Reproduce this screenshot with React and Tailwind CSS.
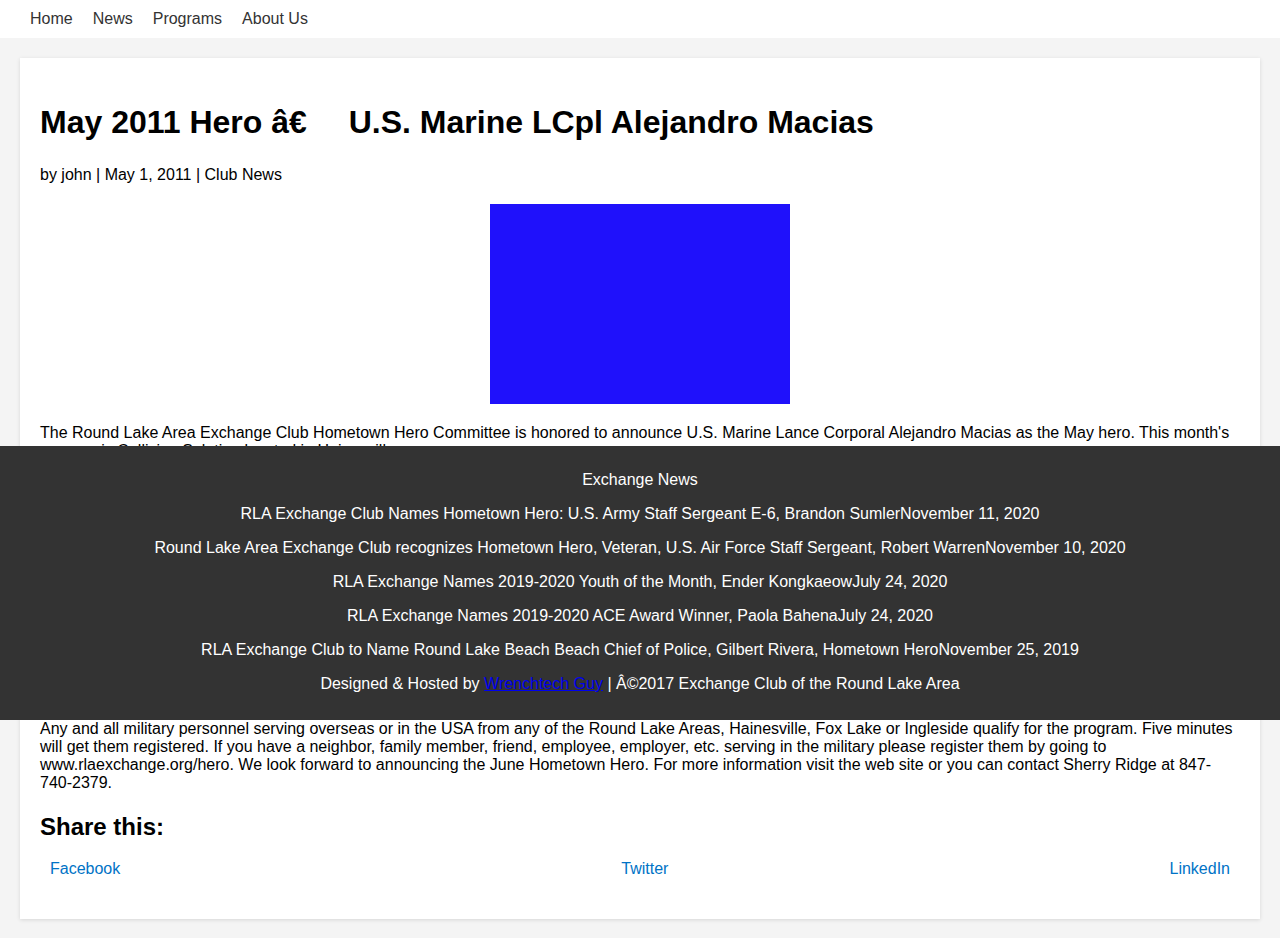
const navItems = ["Home", "News", "Programs", "About Us"];

const recent = [
  ["RLA Exchange Club Names Hometown Hero: U.S. Army Staff Sergeant E-6, Brandon Sumler", "November 11, 2020"],
  ["Round Lake Area Exchange Club recognizes Hometown Hero, Veteran, U.S. Air Force Staff Sergeant, Robert Warren", "November 10, 2020"],
  ["RLA Exchange Names 2019-2020 Youth of the Month, Ender Kongkaeow", "July 24, 2020"],
  ["RLA Exchange Names 2019-2020 ACE Award Winner, Paola Bahena", "July 24, 2020"],
  ["RLA Exchange Club to Name Round Lake Beach Beach Chief of Police, Gilbert Rivera, Hometown Hero", "November 25, 2019"],
];

export default function App() {
  return (
    <div className="relative min-h-[938px] bg-[#f4f4f4] text-black font-['Liberation_Sans',Arial,sans-serif] text-base leading-[18px]">
      {/* top nav */}
      <nav className="bg-white h-[38px]">
        <ul className="flex gap-5 pl-[30px] pt-[10px] text-[#333]">
          {navItems.map((n) => (
            <li key={n}>
              <a href="#">{n}</a>
            </li>
          ))}
        </ul>
      </nav>

      <main className="p-5">
        <article className="bg-white shadow-[0_1px_4px_rgba(0,0,0,0.12)] px-5 pt-[46px] pb-[41px]">
          <h1 className="text-[32px] font-bold leading-[37px]">
            May 2011 Hero â€<span className="inline-block w-[33px]" /> U.S. Marine LCpl Alejandro Macias
          </h1>
          <p className="mt-[25px]">by john | May 1, 2011 | Club News</p>
          <div className="flex justify-center mt-[20px]">
            <div className="w-[300px] h-[200px] bg-[#1f11fb]" />
          </div>
          <div className="mt-[20px] flex flex-col gap-4">
            <p>
              The Round Lake Area Exchange Club Hometown Hero Committee is honored to announce U.S. Marine Lance Corporal Alejandro Macias as the May hero. This month's sponsor is Collision Solution located in Hainesville.
            </p>
            <p>
              LCpl Macias is the son of Alejandro and Maria Macias of Round Lake Beach. He is a graduate of Round Lake High School and enlisted in the United States Marine Corps shortly after graduation. He completed recruit training at Marine Corps Recruit Depot San Diego and is now serving with his unit overseas.
            </p>
            <p>
              His family is very proud of him.
            </p>
            <p>
              The Exchange Club will present the family with a certificate and a banner to be displayed in front of their home. The sponsor will also provide a gift for the family of the hero. The banner will be displayed until the hero returns home safely, at which time the Exchange Club will honor the hero in person at one of its weekly meetings held at the Round Lake Area Park District.
            </p>
            <p>
              The Hometown Hero program honors our local servicemen and servicewomen and their families.
            </p>
            <p>
              Each month the Exchange Club selects a new Hometown Hero from the registered names, and a local business sponsors the award. Sponsors are always welcome and appreciated by the club and by the families of our heroes.
            </p>
            <p className="mt-[2px]">
              Any and all military personnel serving overseas or in the USA from any of the Round Lake Areas, Hainesville, Fox Lake or Ingleside qualify for the program. Five minutes will get them registered. If you have a neighbor, family member, friend, employee, employer, etc. serving in the military please register them by going to www.rlaexchange.org/hero. We look forward to announcing the June Hometown Hero. For more information visit the web site or you can contact Sherry Ridge at 847-740-2379.
            </p>
          </div>
          <h2 className="mt-[21px] text-2xl font-bold leading-[28px]">Share this:</h2>
          <div className="mt-[19px] flex justify-between px-[10px] text-[#0073c6]">
            <a href="#">Facebook</a>
            <a href="#">Twitter</a>
            <a href="#">LinkedIn</a>
          </div>
        </article>
      </main>

      {/* footer laid over the article */}
      <footer className="absolute left-0 right-0 top-[446px] bg-[#333] text-white text-center pt-[25px] pb-[27px] flex flex-col gap-4">
        <p>Exchange News</p>
        {recent.map(([t, d]) => (
          <p key={t}>
            {t}
            {d}
          </p>
        ))}
        <p>
          Designed &amp; Hosted by{" "}
          <a href="#" className="text-[#0000ee] underline">
            Wrenchtech Guy
          </a>{" "}
          | Â©2017 Exchange Club of the Round Lake Area
        </p>
      </footer>
    </div>
  );
}
